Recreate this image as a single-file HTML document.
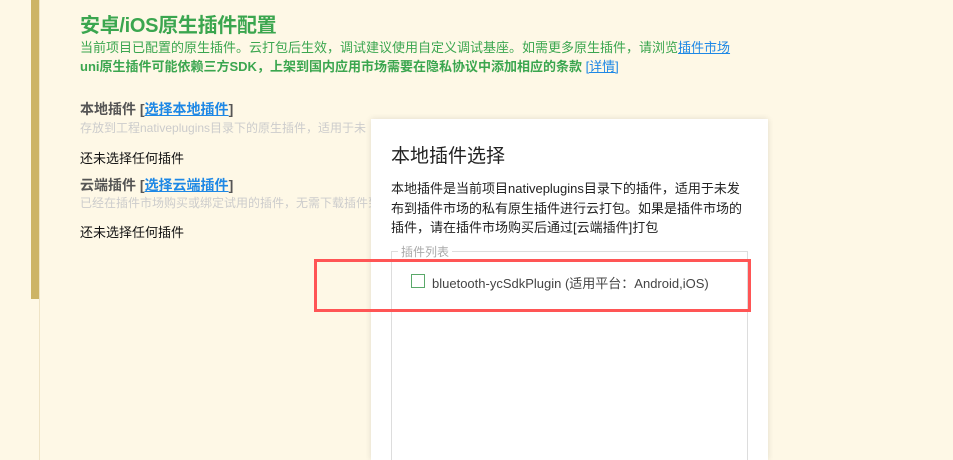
<!DOCTYPE html>
<html style="overflow:hidden;height:460px"><head><meta charset="utf-8"><style>
body{margin:0;width:953px;height:460px;background:#fef8e6;font-family:"Liberation Sans","Noto Sans CJK SC",sans-serif;position:relative;overflow:hidden}
.a{position:absolute;white-space:nowrap}
.g{color:#3ba64f}
a{color:#1e88e5;text-decoration:underline}
</style></head><body>
<div class="a" style="left:31px;top:0;width:8px;height:299px;background:#cdb466"></div>
<div class="a" style="left:39px;top:0;width:1px;height:460px;background:#efe4c6"></div>
<div class="a g" style="left:80px;top:9px;font-size:20px;font-weight:bold;letter-spacing:-0.3px">安卓/iOS原生插件配置</div>
<div class="a g" style="left:80px;top:37px;font-size:13px">当前项目已配置的原生插件。云打包后生效，调试建议使用自定义调试基座。如需更多原生插件，请浏览<a href="#">插件市场</a></div>
<div class="a g" style="left:80px;top:56px;font-size:13px;font-weight:bold">uni原生插件可能依赖三方SDK，上架到国内应用市场需要在隐私协议中添加相应的条款 <a href="#" style="font-weight:normal">[详情]</a></div>
<div class="a" style="left:80px;top:99px;font-size:14px;font-weight:bold;color:#555">本地插件 [<a href="#">选择本地插件</a>]</div>
<div class="a" style="left:80px;top:119px;font-size:12px;color:#ccc">存放到工程nativeplugins目录下的原生插件，适用于未</div>
<div class="a" style="left:80px;top:148px;font-size:13px;color:#111">还未选择任何插件</div>
<div class="a" style="left:80px;top:175px;font-size:14px;font-weight:bold;color:#555">云端插件 [<a href="#">选择云端插件</a>]</div>
<div class="a" style="left:80px;top:194px;font-size:12px;color:#ccc">已经在插件市场购买或绑定试用的插件，无需下载插件到</div>
<div class="a" style="left:80px;top:222px;font-size:13px;color:#111">还未选择任何插件</div>
<div class="a" style="left:371px;top:119px;width:397px;height:341px;background:#fff;box-shadow:0 0 6px rgba(0,0,0,.12)"></div>
<div class="a" style="left:391px;top:141px;font-size:19px;color:#222">本地插件选择</div>
<div class="a" style="left:391px;top:179px;font-size:13px;line-height:19.5px;color:#222;white-space:normal;width:360px">本地插件是当前项目nativeplugins目录下的插件，适用于未发布到插件市场的私有原生插件进行云打包。如果是插件市场的插件，请在插件市场购买后通过[云端插件]打包</div>
<div class="a" style="left:391px;top:251px;width:355px;height:215px;border:1px solid #ddd"></div>
<div class="a" style="left:398px;top:243px;font-size:12px;color:#aaa;background:#fff;padding:0 3px">插件列表</div>
<div class="a" style="left:411px;top:274px;width:12px;height:12px;border:1px solid #5aa96a"></div>
<div class="a" style="left:432px;top:273px;font-size:13px;color:#444">bluetooth-ycSdkPlugin (适用平台：Android,iOS)</div>
<div class="a" style="left:314px;top:259px;width:431px;height:47px;border:3px solid #f55"></div>
</body></html>
